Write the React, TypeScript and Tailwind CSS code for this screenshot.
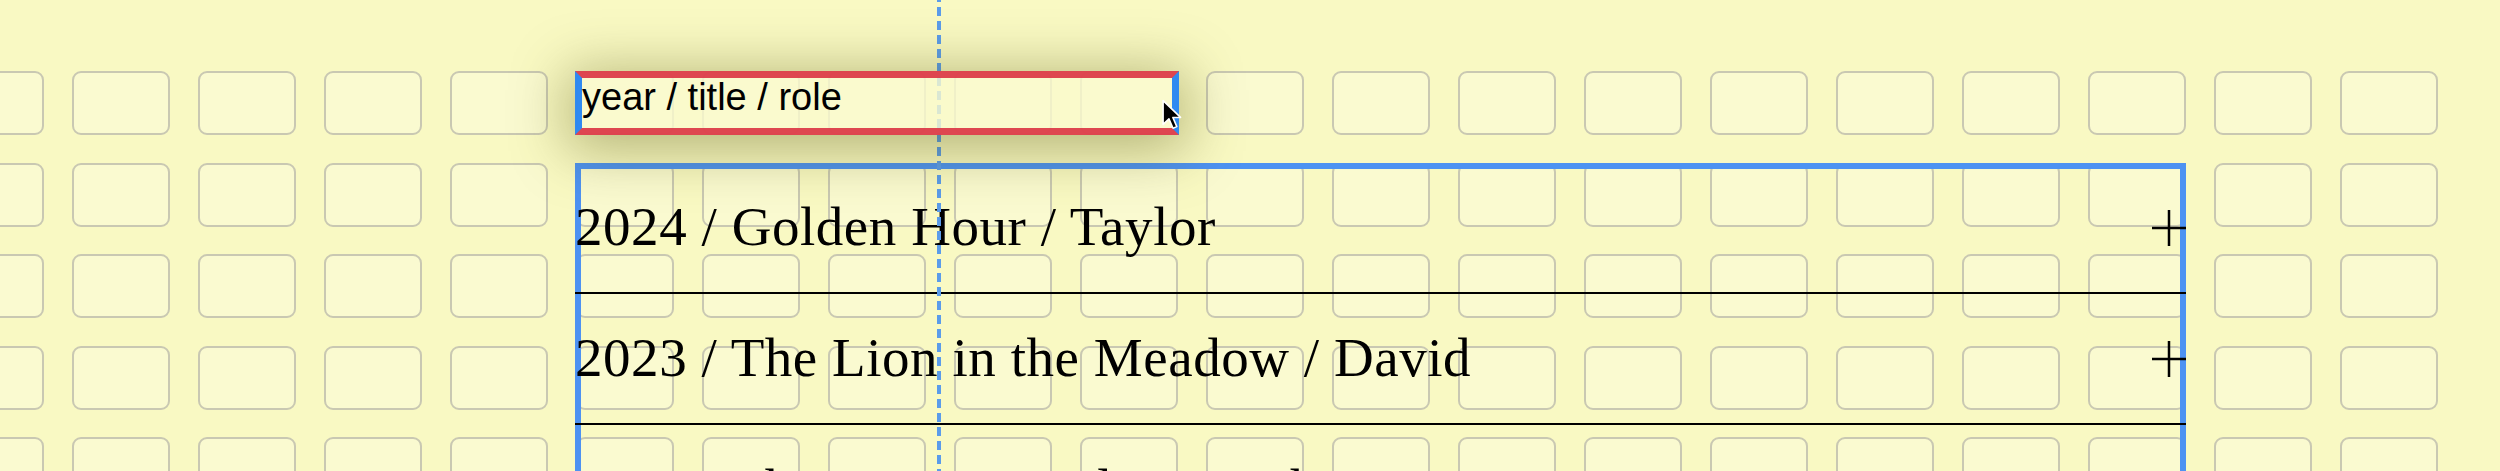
// Credits editor: a field being dragged over a grid of slots, above the list of credits.

const credits = [
  "2024 / Golden Hour / Taylor",
  "2023 / The Lion in the Meadow / David",
  "2022 / The Winter Garden / Ruth",
];

// Background slot grid, 20 columns x 5 rows.
function SlotGrid() {
  const slots = Array.from({ length: 100 }, (_, i) => i);
  return (
    <div className="pointer-events-none absolute inset-0 overflow-hidden">
      <div className="ml-[-54px] mt-[71px] grid grid-cols-[repeat(20,98px)] auto-rows-[64px] gap-x-[28px] gap-y-[27.5px]">
        {slots.map((i) => (
          <div
            key={i}
            className="rounded-[9px] border-2 border-[#c9c8b2] bg-[#fafad0]"
          />
        ))}
      </div>
    </div>
  );
}

function PlusIcon() {
  return (
    <svg width="34" height="36" viewBox="0 0 34 36" className="shrink-0">
      <path d="M0 18H34M17 0V36" stroke="#000" strokeWidth="2.5" fill="none" />
    </svg>
  );
}

function Pointer() {
  return (
    <svg
      width="21"
      height="32"
      viewBox="0 0 19 28"
      className="pointer-events-none absolute left-[1162px] top-[99px] z-40"
    >
      <path
        d="M1 1L1 22.5L6.3 17.4L10 26L13.4 24.5L9.8 16.2L16.8 16.2Z"
        fill="#000"
        stroke="#fff"
        strokeWidth="1.4"
        strokeLinejoin="round"
      />
    </svg>
  );
}

export default function App() {
  return (
    <div className="relative h-[471px] w-[2500px] overflow-hidden bg-[#f9f9c3]">
      <SlotGrid />

      <div className="relative pl-[575px] pt-[71px]">
        {/* field being dragged */}
        <div className="relative z-30 h-[64px] w-[604px] border-[7px] border-x-[#1a7ef5]/90 border-y-[#dc3343]/90 bg-[#fafacd]/80 shadow-[0_8px_56px_8px_rgba(80,80,10,0.4)]">
          <div className="whitespace-nowrap font-['Liberation_Sans',Arial,sans-serif] text-[38px] leading-[38px] text-black">
            year / title / role
          </div>
        </div>

        {/* credits list */}
        <div className="relative z-10 mt-[28px] w-[1611px] shadow-[inset_0_0_0_6px_#4d92f2]">
          {credits.map((c) => (
            <div
              key={c}
              className="flex h-[131px] items-center justify-between border-b-2 border-black"
            >
              <span className="whitespace-nowrap font-['Liberation_Serif','Times_New_Roman',serif] text-[55px] tracking-[0.55px] text-black">
                {c}
              </span>
              <PlusIcon />
            </div>
          ))}
        </div>
      </div>

      {/* drop guide */}
      <div className="pointer-events-none absolute left-[937px] top-0 z-20 h-full w-[4px] bg-[repeating-linear-gradient(to_bottom,#5b9cea_0_2px,transparent_2px_7px,#5b9cea_7px_14px)]" />

      <Pointer />
    </div>
  );
}
